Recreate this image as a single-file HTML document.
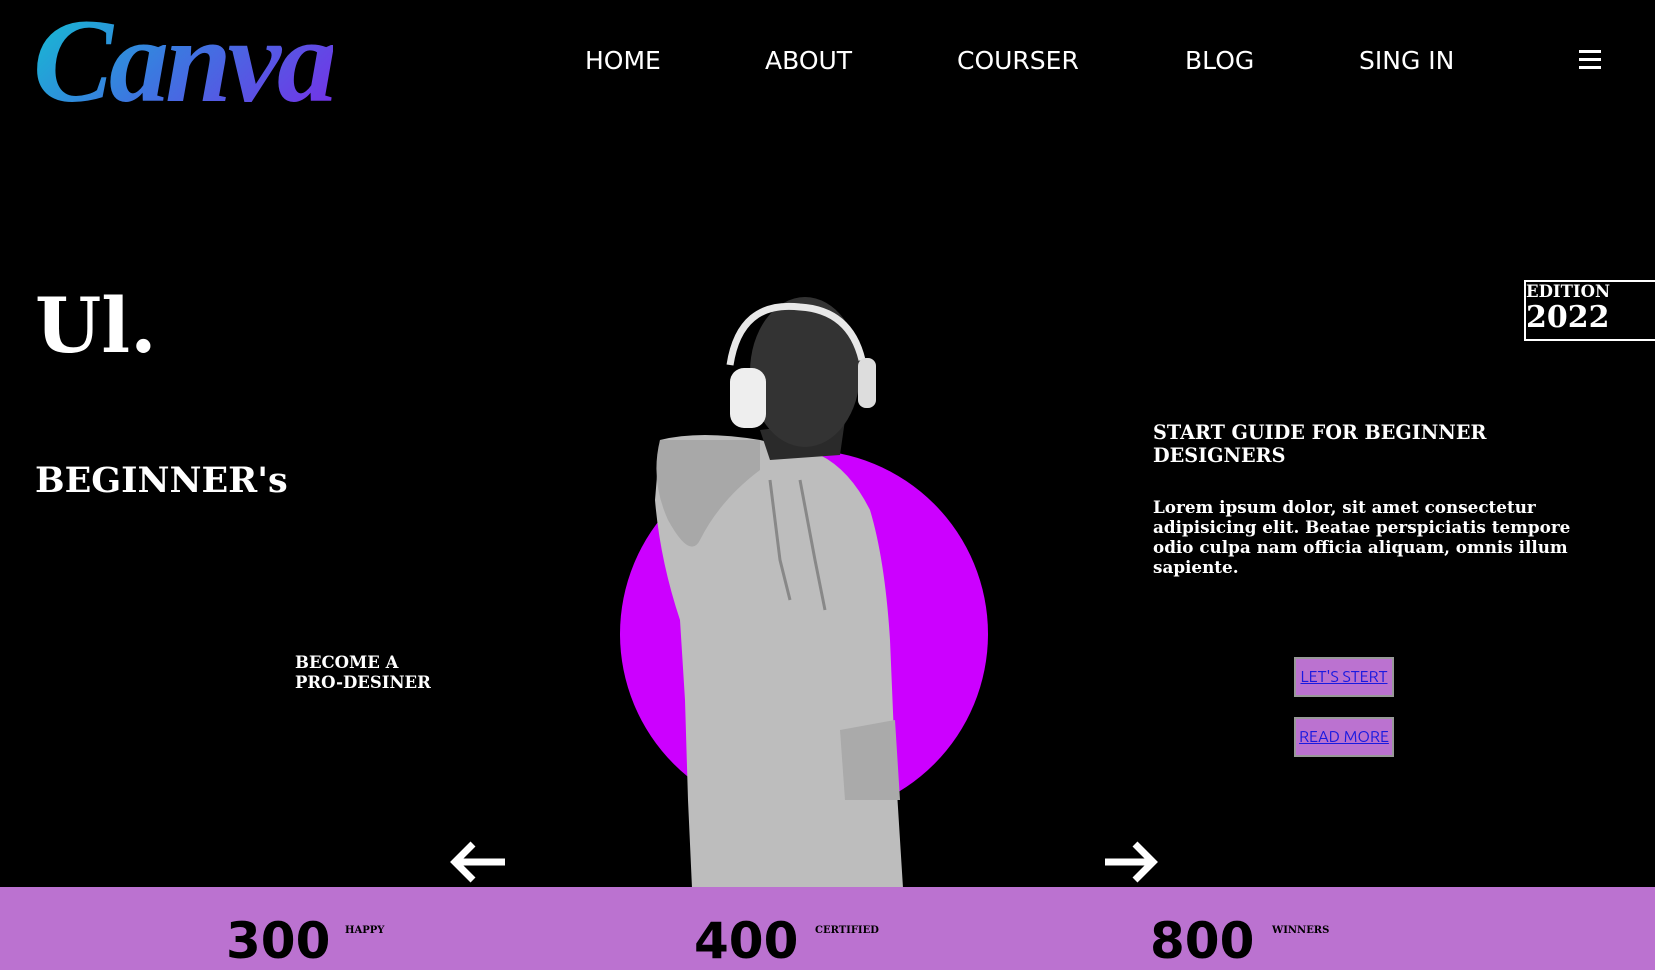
<!DOCTYPE html>
<html><head><meta charset="utf-8"><style>
*{margin:0;padding:0;box-sizing:border-box}
html{background:#bb72d0}
body{width:1655px;height:930px;background:#000;overflow:hidden;position:relative;font-family:"DejaVu Serif",serif;color:#fff}
.a{position:absolute;white-space:nowrap}
.nav{font-family:"DejaVu Sans",sans-serif;font-size:25px;top:46px}
.logo{left:33px;top:-8px;font-family:"Liberation Serif",serif;font-style:italic;font-size:120px;font-weight:bold;letter-spacing:-4px;background:linear-gradient(135deg,#10c5d0 0%,#3a7ae0 45%,#7a2ae8 100%);-webkit-background-clip:text;background-clip:text;color:transparent}
.b{font-weight:bold}
.btn{position:absolute;left:1294px;width:100px;height:40px;background:#bb72d0;border:2px solid #999;font-family:"Ubuntu","DejaVu Sans",sans-serif;font-size:16px;color:#1a1ae0;text-decoration:underline;text-align:center;line-height:36px}
</style></head><body>
<div class="a logo">Canva</div>
<div class="a nav" style="left:585px">HOME</div>
<div class="a nav" style="left:765px">ABOUT</div>
<div class="a nav" style="left:957px">COURSER</div>
<div class="a nav" style="left:1185px">BLOG</div>
<div class="a nav" style="left:1359px">SING IN</div>
<div class="a" style="left:1579px;top:50px;width:22px;height:3px;background:#fff"></div>
<div class="a" style="left:1579px;top:58px;width:22px;height:3px;background:#fff"></div>
<div class="a" style="left:1579px;top:66px;width:22px;height:3px;background:#fff"></div>

<div class="a b" style="left:35px;top:281px;font-size:76px">Ul.</div>
<div class="a b" style="left:35px;top:460px;font-size:35px">BEGINNER's</div>
<div class="a b" style="left:295px;top:653px;font-size:16.5px;line-height:20px">BECOME A<br>PRO-DESINER</div>

<svg class="a" style="left:0;top:0" width="1655" height="930">
<circle cx="804" cy="634" r="184" fill="#cc00ff"/>
<path d="M660 440 Q700 430 760 440 L820 455 Q850 470 870 510 Q885 560 890 640 L895 760 L903 888 L692 888 L688 800 L685 700 L680 620 Q660 560 655 500 Z" fill="#bdbdbd"/>
<path d="M660 440 Q650 480 668 520 Q690 560 700 540 Q720 500 760 470 L760 440 Z" fill="#a8a8a8"/>
<path d="M840 730 L895 720 L900 800 L845 800 Z" fill="#aaa"/>
<path d="M770 480 L780 560 L790 600 M800 480 L815 560 L825 610" stroke="#888" stroke-width="3" fill="none"/>
<path d="M760 430 L770 460 L840 455 L845 420 Z" fill="#2a2a2a"/>
<ellipse cx="805" cy="372" rx="55" ry="75" fill="#333"/>
<path d="M730 365 Q740 300 800 307 Q850 310 862 360" stroke="#e8e8e8" stroke-width="7" fill="none"/>
<rect x="730" y="368" width="36" height="60" rx="14" fill="#eee"/>
<rect x="858" y="358" width="18" height="50" rx="8" fill="#ddd"/>
<path d="M455 862 L505 862 M473 844 L455 862 L473 880" stroke="#fff" stroke-width="7" fill="none"/>
<path d="M1105 862 L1153 862 M1135 844 L1153 862 L1135 880" stroke="#fff" stroke-width="7" fill="none"/>
</svg>

<div class="a" style="left:1524px;top:280px;width:140px;height:61px;border:2px solid #fff"></div>
<div class="a b" style="left:1526px;top:282px;font-size:16.5px">EDITION</div>
<div class="a b" style="left:1526px;top:300px;font-size:30px">2022</div>

<div class="a b" style="left:1153px;top:421px;font-size:19.2px;line-height:23px">START GUIDE FOR BEGINNER<br>DESIGNERS</div>
<div class="a b" style="left:1153px;top:497px;font-size:16.8px;line-height:20px">Lorem ipsum dolor, sit amet consectetur<br>adipisicing elit. Beatae perspiciatis tempore<br>odio culpa nam officia aliquam, omnis illum<br>sapiente.</div>
<div class="btn" style="top:657px">LET'S STERT</div>
<div class="btn" style="top:717px">READ MORE</div>

<div class="a" style="left:0;top:887px;width:1655px;height:43px;background:#bb72d0"></div>
<div class="a b" style="left:226px;top:912px;font-size:50px;color:#000;font-family:'DejaVu Sans',sans-serif">300</div>
<div class="a b" style="left:694px;top:912px;font-size:50px;color:#000;font-family:'DejaVu Sans',sans-serif">400</div>
<div class="a b" style="left:1150px;top:912px;font-size:50px;color:#000;font-family:'DejaVu Sans',sans-serif">800</div>
<div class="a b" style="left:345px;top:925px;font-size:10px;color:#000">HAPPY</div>
<div class="a b" style="left:815px;top:925px;font-size:10px;color:#000">CERTIFIED</div>
<div class="a b" style="left:1272px;top:925px;font-size:10px;color:#000">WINNERS</div>
</body></html>
